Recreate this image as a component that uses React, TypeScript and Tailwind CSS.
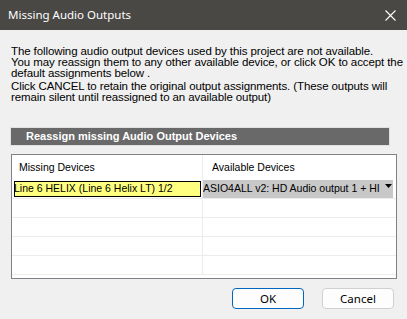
import React from "react";

export default function App() {
  const rows = [0, 1, 2, 3, 4];
  return (
    <div className="w-[407px] h-[319px] bg-[#f0f0f0] overflow-hidden flex flex-col" style={{ fontFamily: "'Liberation Sans', Arial, sans-serif" }}>
      <div className="h-[30px] bg-[#4a4845] flex items-center justify-between pl-[8px] pr-[10px] shrink-0">
        <span className="text-white text-[11.5px]" style={{ fontFamily: "'Noto Sans', 'Open Sans', sans-serif" }}>Missing Audio Outputs</span>
        <svg width="11" height="11" viewBox="0 0 11 11" className="mr-[1px]">
          <path d="M0.5 0.5 L10.5 10.5 M10.5 0.5 L0.5 10.5" stroke="#ffffff" strokeWidth="1.1" />
        </svg>
      </div>
      <div className="pl-[11px] pt-[16px] text-[11.5px] leading-[11px] text-black whitespace-nowrap shrink-0" style={{ letterSpacing: "-0.1px" }}>
        <p>The following audio output devices used by this project are not available.</p>
        <p>You may reassign them to any other available device, or click OK to accept the</p>
        <p>default assignments below .</p>
        <p className="mt-[2px]">Click CANCEL to retain the original output assignments. (These outputs will</p>
        <p>remain silent until reassigned to an available output)</p>
      </div>
      <div className="ml-[10px] mt-[24px] w-[380px] h-[19px] bg-[#696969] border border-[#e0e0e0] flex items-center pl-[15px] shrink-0">
        <span className="text-white font-bold text-[11px]">Reassign missing Audio Output Devices</span>
      </div>
      <div className="ml-[11px] mt-[8px] w-[386px] h-[125px] border border-[#7f8287] bg-white flex flex-col text-[10.5px] shrink-0">
        <div className="flex h-[25px] shrink-0">
          <div className="w-[191px] border-r border-[#ececec] flex items-center pl-[7px] text-black shrink-0">Missing Devices</div>
          <div className="flex-1 flex items-center pl-[9px] text-black">Available Devices</div>
        </div>
        {rows.map((i) => (
          <div key={i} className="flex h-[19px] shrink-0 border-b border-[#ececec]">
            {i === 0 ? (
              <>
                <div className="w-[191px] pl-[2px] pr-[1px] py-[1px] border-r border-[#ececec] shrink-0">
                  <div className="h-full bg-[#ffff80] border border-black flex items-center overflow-hidden whitespace-nowrap">
                    <span className="-ml-[1px] text-black">Line 6 HELIX (Line 6 Helix LT) 1/2</span>
                  </div>
                </div>
                <div className="w-[190px] bg-[#c8c8c8] flex justify-between overflow-hidden whitespace-nowrap pr-[1px] shrink-0">
                  <span className="text-black overflow-hidden self-center">ASIO4ALL v2: HD Audio output 1 + HI</span>
                  <svg width="7" height="4" viewBox="0 0 7 4" className="shrink-0 mt-[4px]">
                    <path d="M0 0 L7 0 L3.5 4 Z" fill="#000" />
                  </svg>
                </div>
              </>
            ) : (
              <>
                <div className="w-[191px] border-r border-[#ececec] shrink-0" />
                <div className="flex-1" />
              </>
            )}
          </div>
        ))}
      </div>
      <div className="flex justify-end gap-[18px] pr-[13px] mt-[9px]" style={{ fontFamily: "'Noto Sans', 'Open Sans', sans-serif" }}>
        <button className="w-[72px] h-[21px] rounded-[4px] border border-[#0067c0] bg-[#fdfdfd] text-[11.5px] text-black flex items-center justify-center">OK</button>
        <button className="w-[72px] h-[21px] rounded-[4px] border border-[#d0d0d0] bg-[#fdfdfd] text-[11.5px] text-black flex items-center justify-center">Cancel</button>
      </div>
    </div>
  );
}
